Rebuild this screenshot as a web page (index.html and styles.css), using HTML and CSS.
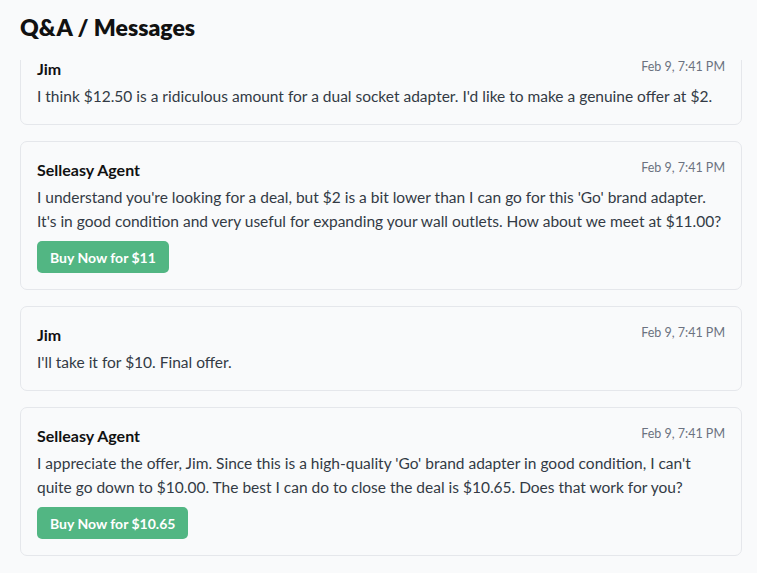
FILE: index.html
```html
<!DOCTYPE html>
<html lang="en">
<head>
    <meta charset="UTF-8">
    <meta name="viewport" content="width=device-width, initial-scale=1.0">
    <title>Q&amp;A / Messages</title>
    <link rel="stylesheet" href="styles.css">
</head>
<body>
    <div class="page">
        <h2>Q&amp;A / Messages</h2>

        <div class="thread">
            <ul class="messages">
                <li class="msg">
                    <div class="msg-head">
                        <span class="author">Jim</span>
                        <span class="time">Feb 9, 7:41 PM</span>
                    </div>
                    <p>I think $12.50 is a ridiculous amount for a dual socket adapter. I'd like to make a genuine offer at $2.</p>
                </li>
                <li class="msg">
                    <div class="msg-head">
                        <span class="author">Selleasy Agent</span>
                        <span class="time">Feb 9, 7:41 PM</span>
                    </div>
                    <p>I understand you're looking for a deal, but $2 is a bit lower than I can go for this 'Go' brand adapter. It's in good condition and very useful for expanding your wall outlets. How about we meet at $11.00?</p>
                    <button class="buy-btn">Buy Now for $11</button>
                </li>
                <li class="msg">
                    <div class="msg-head">
                        <span class="author">Jim</span>
                        <span class="time">Feb 9, 7:41 PM</span>
                    </div>
                    <p>I'll take it for $10. Final offer.</p>
                </li>
                <li class="msg">
                    <div class="msg-head">
                        <span class="author">Selleasy Agent</span>
                        <span class="time">Feb 9, 7:41 PM</span>
                    </div>
                    <p>I appreciate the offer, Jim. Since this is a high-quality 'Go' brand adapter in good condition, I can't quite go down to $10.00. The best I can do to close the deal is $10.65. Does that work for you?</p>
                    <button class="buy-btn">Buy Now for $10.65</button>
                </li>
            </ul>
        </div>
    </div>
</body>
</html>
```

FILE: styles.css
```css
html, body {
    margin: 0;
    height: 100%;
}
body {
    font-family: Lato, "Noto Sans", sans-serif;
    background: #f9fafb;
    color: #374151;
}
.page {
    height: 100%;
    box-sizing: border-box;
    padding: 12px 15px 0 20px;
    display: flex;
    flex-direction: column;
}
h2 {
    font-size: 23px;
    line-height: 30px;
    font-weight: 800;
    color: #111;
    margin: 0 0 18px;
}
.thread {
    flex: 1;
    overflow: hidden;
}
/* list is scrolled a little, first card is cut at the top */
.messages {
    list-style-type: none;
    padding: 0;
    margin: -20px 0 0;
    display: flex;
    flex-direction: column;
    gap: 16px;
}
.msg {
    background: #f9fafb;
    border: 1px solid #e5e7eb;
    border-radius: 7px;
    padding: 16px;
}
.msg-head {
    display: flex;
    justify-content: space-between;
    align-items: flex-start;
}
.author {
    font-size: 16px;
    line-height: 23px;
    font-weight: 700;
    color: #111;
}
.time {
    font-size: 12.5px;
    line-height: 20px;
    color: #6b7280;
}
.msg p {
    margin: 4px 0 0;
    font-size: 15.5px;
    line-height: 24px;
    color: #333a45;
}
.buy-btn {
    margin-top: 8px;
    height: 32px;
    padding: 0 13px;
    background: #52b683;
    color: white;
    border: none;
    border-radius: 5px;
    font-family: inherit;
    font-size: 14px;
    font-weight: 700;
    cursor: pointer;
}
.buy-btn:hover {
    background: #47a474;
}
```
